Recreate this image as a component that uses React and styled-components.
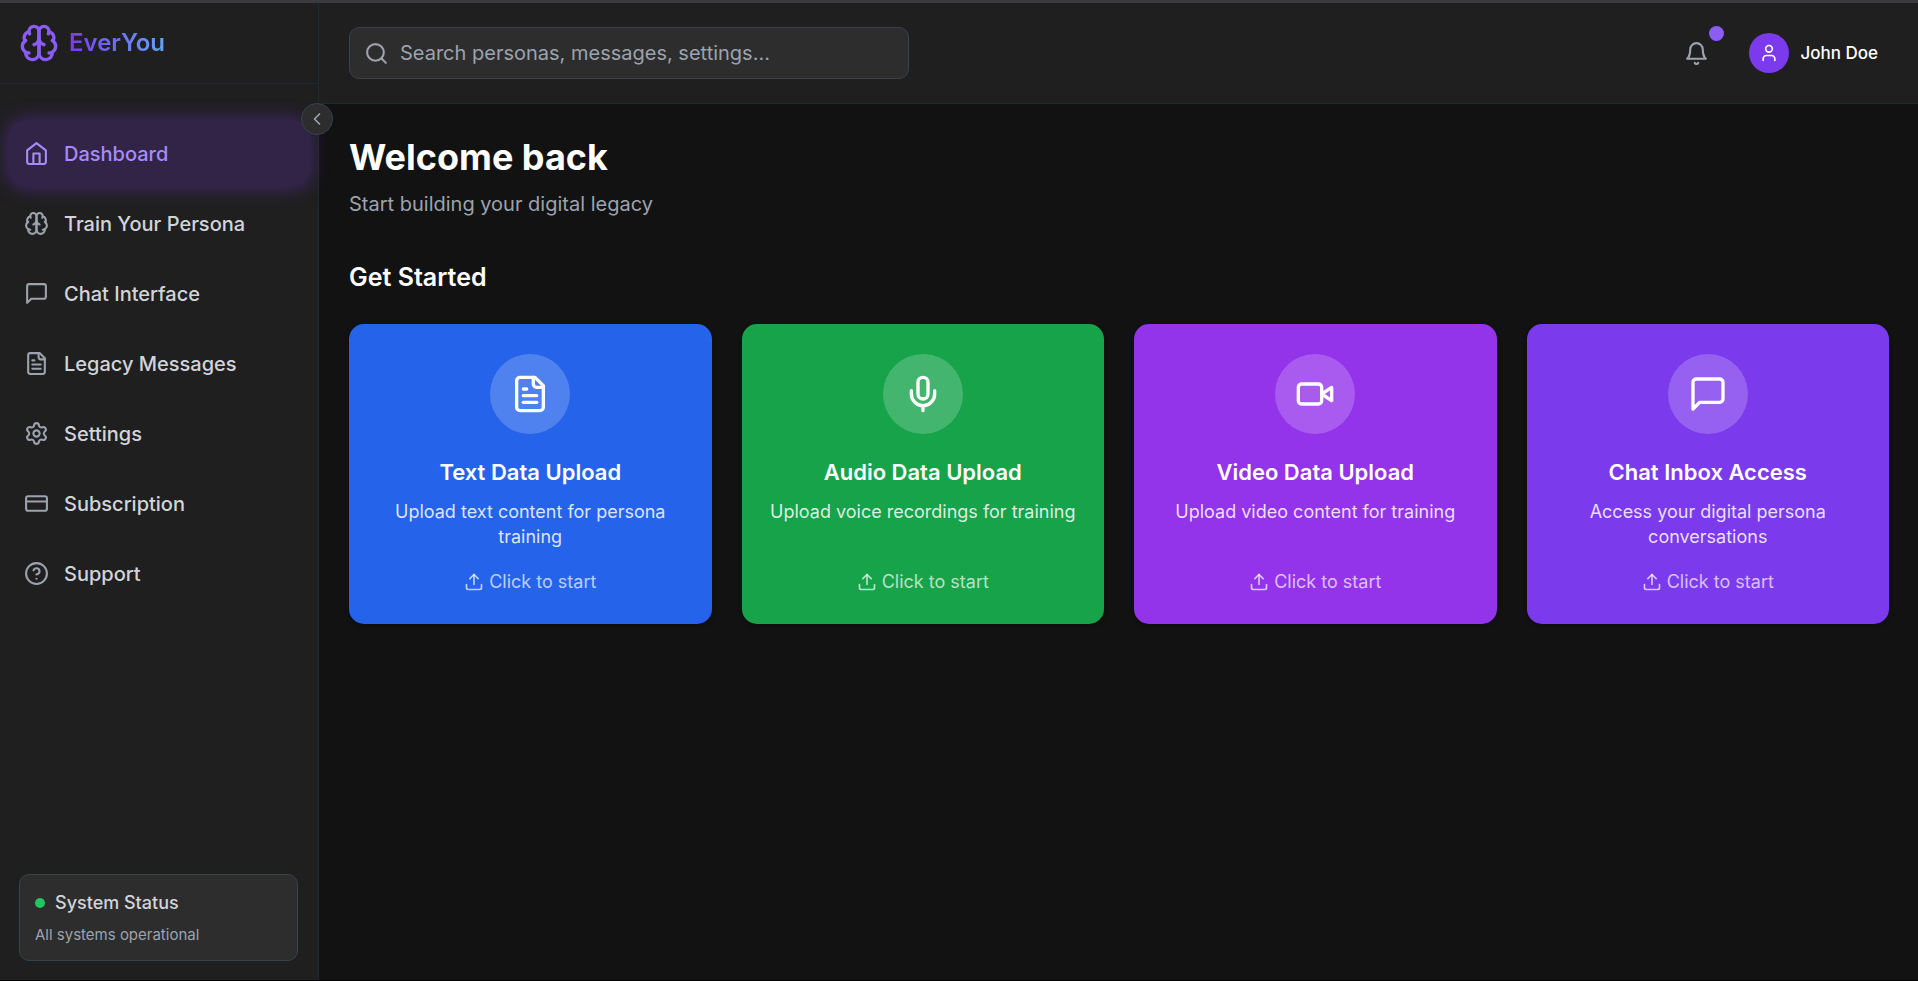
import React from "react";
import styled, { createGlobalStyle } from "styled-components";
import { ChevronLeft, CreditCard, Search, Settings } from "lucide-react";

const GlobalStyle = createGlobalStyle`
  * { box-sizing: border-box; }
  body {
    margin: 0;
    background: #121212;
    color: #ffffff;
    font-family: Inter, "Liberation Sans", sans-serif;
    font-size: 20px;
    line-height: 30px;
  }
  button, input { font: inherit; color: inherit; }
  h1, h2, h3, p { margin: 0; }
`;

const Glyph = styled.svg.attrs({
  viewBox: "0 0 24 24",
  fill: "none",
  stroke: "currentColor",
  strokeWidth: 2,
  strokeLinecap: "round",
  strokeLinejoin: "round",
  "aria-hidden": true,
})`
  flex: none;
`;

const makeIcon = (drawing) => ({ size = 25 }) => (
  <Glyph width={size} height={size}>{drawing}</Glyph>
);

const Brain = makeIcon(
  <>
    <path d="M12 5a3 3 0 1 0-5.997.125 4 4 0 0 0-2.526 5.77 4 4 0 0 0 .556 6.588A4 4 0 1 0 12 18Z" />
    <path d="M12 5a3 3 0 1 1 5.997.125 4 4 0 0 1 2.526 5.77 4 4 0 0 1-.556 6.588A4 4 0 1 1 12 18Z" />
    <path d="M15 13a4.5 4.5 0 0 1-3-4 4.5 4.5 0 0 1-3 4" />
    <path d="M17.599 6.5a3 3 0 0 0 .399-1.375" />
    <path d="M6.003 5.125A3 3 0 0 0 6.401 6.5" />
    <path d="M3.477 10.896a4 4 0 0 1 .585-.396" />
    <path d="M19.938 10.5a4 4 0 0 1 .585.396" />
    <path d="M6 18a4 4 0 0 1-1.967-.516" />
    <path d="M19.967 17.484A4 4 0 0 1 18 18" />
  </>
);
const Home = makeIcon(
  <>
    <path d="m3 9 9-7 9 7v11a2 2 0 0 1-2 2H5a2 2 0 0 1-2-2z" />
    <polyline points="9 22 9 12 15 12 15 22" />
  </>
);
const Message = makeIcon(
  <path d="M21 15a2 2 0 0 1-2 2H7l-4 4V5a2 2 0 0 1 2-2h14a2 2 0 0 1 2 2z" />
);
const FileText = makeIcon(
  <>
    <path d="M15 2H6a2 2 0 0 0-2 2v16a2 2 0 0 0 2 2h12a2 2 0 0 0 2-2V7Z" />
    <path d="M14 2v4a2 2 0 0 0 2 2h4" />
    <path d="M10 9H8" />
    <path d="M16 13H8" />
    <path d="M16 17H8" />
  </>
);
const Help = makeIcon(
  <>
    <circle cx="12" cy="12" r="10" />
    <path d="M9.09 9a3 3 0 0 1 5.83 1c0 2-3 3-3 3" />
    <path d="M12 17h.01" />
  </>
);
const Bell = makeIcon(
  <>
    <path d="M6 8a6 6 0 0 1 12 0c0 7 3 9 3 9H3s3-2 3-9" />
    <path d="M10.3 21a1.94 1.94 0 0 0 3.4 0" />
  </>
);
const User = makeIcon(
  <>
    <path d="M19 21v-2a4 4 0 0 0-4-4H9a4 4 0 0 0-4 4v2" />
    <circle cx="12" cy="7" r="4" />
  </>
);
const Mic = makeIcon(
  <>
    <path d="M12 2a3 3 0 0 0-3 3v7a3 3 0 0 0 6 0V5a3 3 0 0 0-3-3Z" />
    <path d="M19 10v2a7 7 0 0 1-14 0v-2" />
    <path d="M12 19v3" />
  </>
);
const Video = makeIcon(
  <>
    <path d="m22 8-6 4 6 4V8Z" />
    <rect width="14" height="12" x="2" y="6" rx="2" ry="2" />
  </>
);
const Upload = makeIcon(
  <>
    <path d="M21 15v4a2 2 0 0 1-2 2H5a2 2 0 0 1-2-2v-4" />
    <polyline points="17 8 12 3 7 8" />
    <path d="M12 3v12" />
  </>
);

const Page = styled.div`
  display: flex;
  min-height: 100vh;
  border-top: 3px solid #3b3a40;
  border-bottom: 1px solid #000000;
`;

const Sidebar = styled.aside`
  position: relative;
  z-index: 1;
  flex: none;
  display: flex;
  flex-direction: column;
  width: 319px;
  background: #1f1f1f;
  border-right: 1px solid #1f2937;
`;

const Brand = styled.div`
  display: flex;
  align-items: center;
  gap: 10px;
  height: 81px;
  padding: 0 19px;
  border-bottom: 1px solid #1f2937;
  color: #8b5cf6;
`;

const BrandName = styled.span`
  font-size: 24px;
  font-weight: 600;
  line-height: 30px;
  background: linear-gradient(to right, #7c3aed, #60a5fa);
  background-clip: text;
  color: transparent;
`;

const CollapseButton = styled.button`
  position: absolute;
  top: 100px;
  right: -15px;
  display: flex;
  align-items: center;
  justify-content: center;
  width: 32px;
  height: 32px;
  padding: 0;
  border: 1px solid #374151;
  border-radius: 50%;
  background: #2d2d2d;
  color: #9ca3af;
  cursor: pointer;
`;

const Nav = styled.nav`
  flex: 1;
  display: flex;
  flex-direction: column;
  gap: 5px;
  padding: 37px 9px;
`;

const NavLink = styled.a`
  display: flex;
  align-items: center;
  gap: 15px;
  height: 65px;
  padding: 0 15px;
  border-radius: 15px;
  font-weight: 500;
  text-decoration: none;
  color: ${(p) => (p.$active ? "#a78bfa" : "#d1d5db")};
  background: ${(p) => (p.$active ? "rgba(124, 58, 237, 0.2)" : "none")};
  box-shadow: ${(p) => (p.$active ? "0 0 20px 1px rgba(124, 58, 237, 0.4)" : "none")};

  svg {
    color: ${(p) => (p.$active ? "#a78bfa" : "#9ca3af")};
  }
`;

const StatusCard = styled.section`
  margin: 0 20px 19px 19px;
  padding: 15px;
  border: 1px solid #374151;
  border-radius: 10px;
  background: #2d2d2d;
`;

const StatusTitle = styled.div`
  display: flex;
  align-items: center;
  gap: 10px;
  margin-bottom: 10px;
  font-size: 18px;
  font-weight: 500;
  line-height: 25px;
  color: #d1d5db;
`;

const StatusDot = styled.span`
  width: 10px;
  height: 10px;
  border-radius: 50%;
  background: #22c55e;
`;

const StatusNote = styled.p`
  font-size: 15px;
  line-height: 20px;
  color: #9ca3af;
`;

const Column = styled.div`
  flex: 1;
  min-width: 0;
`;

const TopBar = styled.header`
  display: flex;
  align-items: center;
  justify-content: space-between;
  height: 101px;
  padding: 0 30px;
  background: #1f1f1f;
  border-bottom: 1px solid #1f2937;
`;

const SearchBox = styled.label`
  display: flex;
  align-items: center;
  gap: 11px;
  width: 100%;
  max-width: 560px;
  height: 52px;
  padding: 0 14px;
  border: 1px solid #374151;
  border-radius: 10px;
  background: #2d2d2d;
  color: #9ca3af;
`;

const SearchInput = styled.input`
  flex: 1;
  min-width: 0;
  padding: 0;
  border: 0;
  outline: none;
  background: none;
  color: #ffffff;

  &::placeholder {
    color: #9ca3af;
    opacity: 1;
  }
`;

const Account = styled.div`
  display: flex;
  align-items: center;
  gap: 30px;
`;

const BellButton = styled.button`
  position: relative;
  display: flex;
  padding: 10px;
  border: 0;
  background: none;
  color: #9ca3af;
  cursor: pointer;
`;

const Badge = styled.span`
  position: absolute;
  top: -5px;
  right: -5px;
  width: 15px;
  height: 15px;
  border-radius: 50%;
  background: #8b5cf6;
`;

const ProfileButton = styled.button`
  display: flex;
  align-items: center;
  gap: 11px;
  padding: 0 10px 0 0;
  border: 0;
  background: none;
  font-size: 17px;
  font-weight: 500;
  cursor: pointer;
`;

const Avatar = styled.span`
  display: flex;
  align-items: center;
  justify-content: center;
  width: 40px;
  height: 40px;
  border-radius: 50%;
  background: #7c3aed;
`;

const Main = styled.main`
  padding: 30px 29px 30px 30px;
`;

const Title = styled.h1`
  font-size: 36px;
  font-weight: 700;
  line-height: 46px;
`;

const Subtitle = styled.p`
  margin-top: 9px;
  color: #9ca3af;
`;

const SectionTitle = styled.h2`
  margin: 41px 0 30px;
  font-size: 25px;
  font-weight: 600;
  line-height: 34px;
`;

const CardGrid = styled.div`
  display: grid;
  grid-template-columns: repeat(auto-fit, minmax(300px, 1fr));
  gap: 30px;
`;

const Card = styled.button`
  display: flex;
  flex-direction: column;
  align-items: center;
  min-height: 300px;
  padding: 30px 25px;
  border: 0;
  border-radius: 15px;
  background: ${(p) => p.$color};
  box-shadow: 0 2px 4px rgba(0, 0, 0, 0.3);
  color: #ffffff;
  text-align: center;
  cursor: pointer;
`;

const CardIcon = styled.span`
  display: flex;
  align-items: center;
  justify-content: center;
  width: 80px;
  height: 80px;
  margin-bottom: 20px;
  border-radius: 50%;
  background: rgba(255, 255, 255, 0.2);
`;

const CardTitle = styled.h3`
  margin-bottom: 9px;
  font-size: 22px;
  font-weight: 600;
  line-height: 36px;
`;

const CardText = styled.p`
  flex: 1;
  font-size: 18px;
  line-height: 25px;
  color: rgba(255, 255, 255, 0.85);
`;

const CardAction = styled.span`
  display: flex;
  align-items: center;
  gap: 5px;
  font-size: 18px;
  line-height: 25px;
  color: rgba(255, 255, 255, 0.7);
`;

const navItems = [
  { label: "Dashboard", Icon: Home, active: true },
  { label: "Train Your Persona", Icon: Brain },
  { label: "Chat Interface", Icon: Message },
  { label: "Legacy Messages", Icon: FileText },
  { label: "Settings", Icon: Settings },
  { label: "Subscription", Icon: CreditCard },
  { label: "Support", Icon: Help },
];

const cards = [
  { title: "Text Data Upload", text: "Upload text content for persona training", Icon: FileText, color: "#2563eb" },
  { title: "Audio Data Upload", text: "Upload voice recordings for training", Icon: Mic, color: "#16a34a" },
  { title: "Video Data Upload", text: "Upload video content for training", Icon: Video, color: "#9333ea" },
  { title: "Chat Inbox Access", text: "Access your digital persona conversations", Icon: Message, color: "#7c3aed" },
];

export default function App() {
  return (
    <>
      <GlobalStyle />
      <Page>
        <Sidebar>
          <Brand>
            <Brain size={40} />
            <BrandName>EverYou</BrandName>
          </Brand>
          <Nav>
            {navItems.map(({ label, Icon, active }) => (
              <NavLink key={label} href="#" $active={active}>
                <Icon size={25} />
                {label}
              </NavLink>
            ))}
          </Nav>
          <StatusCard>
            <StatusTitle>
              <StatusDot />
              System Status
            </StatusTitle>
            <StatusNote>All systems operational</StatusNote>
          </StatusCard>
          <CollapseButton aria-label="Collapse sidebar">
            <ChevronLeft size={20} />
          </CollapseButton>
        </Sidebar>
        <Column>
          <TopBar>
            <SearchBox>
              <Search size={25} />
              <SearchInput
                type="text"
                aria-label="Search"
                placeholder="Search personas, messages, settings..."
              />
            </SearchBox>
            <Account>
              <BellButton aria-label="Notifications">
                <Bell size={25} />
                <Badge />
              </BellButton>
              <ProfileButton>
                <Avatar>
                  <User size={20} />
                </Avatar>
                John Doe
              </ProfileButton>
            </Account>
          </TopBar>
          <Main>
            <Title>Welcome back</Title>
            <Subtitle>Start building your digital legacy</Subtitle>
            <SectionTitle>Get Started</SectionTitle>
            <CardGrid>
              {cards.map(({ title, text, Icon, color }) => (
                <Card key={title} $color={color}>
                  <CardIcon>
                    <Icon size={40} />
                  </CardIcon>
                  <CardTitle>{title}</CardTitle>
                  <CardText>{text}</CardText>
                  <CardAction>
                    <Upload size={20} />
                    Click to start
                  </CardAction>
                </Card>
              ))}
            </CardGrid>
          </Main>
        </Column>
      </Page>
    </>
  );
}
